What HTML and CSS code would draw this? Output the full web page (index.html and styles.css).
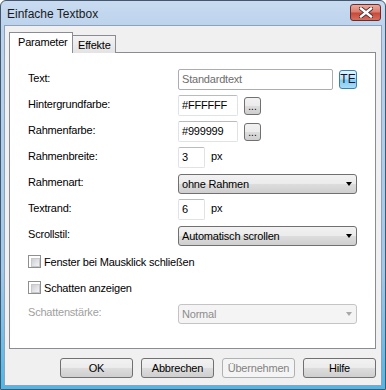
FILE: index.html
```html
<!DOCTYPE html>
<html lang="de">

<head>
    <meta charset="UTF-8" />
    <title>Einfache Textbox</title>
    <link rel="stylesheet" href="styles.css">
</head>

<body>
    <div class="window">
        <div class="titlebar">
            <span class="title">Einfache Textbox</span>
            <div class="close">
                <svg width="14" height="11" viewBox="0 0 14 11">
                    <path d="M2 1.5 L12 9.5 M12 1.5 L2 9.5" stroke="#4a2a2a" stroke-width="4.2" stroke-linecap="square" fill="none" />
                    <path d="M2 1.5 L12 9.5 M12 1.5 L2 9.5" stroke="#ffffff" stroke-width="2.4" stroke-linecap="square" fill="none" />
                </svg>
            </div>
        </div>

        <div class="client">
            <div class="tabs">
                <div class="tab active">Parameter</div>
                <div class="tab">Effekte</div>
            </div>

            <div class="panel">
                <div class="form">
                    <div class="label">Text:</div>
                    <div class="field">
                        <div class="input wide placeholder">Standardtext</div>
                        <div class="te">TE</div>
                    </div>

                    <div class="label">Hintergrundfarbe:</div>
                    <div class="field">
                        <div class="input color">#FFFFFF</div>
                        <div class="dots">...</div>
                    </div>

                    <div class="label">Rahmenfarbe:</div>
                    <div class="field">
                        <div class="input color">#999999</div>
                        <div class="dots">...</div>
                    </div>

                    <div class="label">Rahmenbreite:</div>
                    <div class="field">
                        <div class="input small">3</div>
                        <span class="unit">px</span>
                    </div>

                    <div class="label">Rahmenart:</div>
                    <div class="field">
                        <div class="select">ohne Rahmen<span class="arrow"></span></div>
                    </div>

                    <div class="label">Textrand:</div>
                    <div class="field">
                        <div class="input small">6</div>
                        <span class="unit">px</span>
                    </div>

                    <div class="label">Scrollstil:</div>
                    <div class="field">
                        <div class="select">Automatisch scrollen<span class="arrow"></span></div>
                    </div>

                    <div class="check"><span class="box"></span>Fenster bei Mausklick schließen</div>
                    <div class="check"><span class="box"></span>Schatten anzeigen</div>

                    <div class="label disabled">Schattenstärke:</div>
                    <div class="field">
                        <div class="select off">Normal<span class="arrow"></span></div>
                    </div>
                </div>
            </div>

            <div class="buttons">
                <div class="btn">OK</div>
                <div class="btn">Abbrechen</div>
                <div class="btn off">Übernehmen</div>
                <div class="btn">Hilfe</div>
            </div>
        </div>
    </div>
</body>

</html>
```

FILE: styles.css
```css
body {
    margin: 0;
    font-family: 'Liberation Sans', Arial, sans-serif;
    font-size: 11px;
    letter-spacing: -0.2px;
    color: #000;
    background: #fff;
}

.window {
    width: 386px;
    height: 390px;
    box-sizing: border-box;
    border: 1px solid #44576c;
    border-radius: 6px 6px 0 0;
    background: linear-gradient(180deg, #c8dbf0 0, #bcd3ed 26px, #9fc8ea 70%, #4cb8e8 100%);
    display: flex;
    flex-direction: column;
}

.titlebar {
    height: 24px;
    display: flex;
    justify-content: space-between;
    align-items: flex-start;
    padding: 0 4px 0 6px;
}

.title {
    font-size: 12px;
    letter-spacing: 0;
    line-height: 27px;
    color: #1a1a1a;
}

.close {
    margin-top: 3px;
    width: 29px;
    height: 15px;
    border: 1px solid #6b2c2c;
    border-radius: 3px;
    background: linear-gradient(180deg, #eaa99c 0, #d97f70 45%, #c8493a 55%, #d6705e 100%);
    display: flex;
    align-items: center;
    justify-content: center;
}

.client {
    flex: 1;
    margin: 0 3px 3px;
    border: 1px solid #8ea3bb;
    background: #f0f0f0;
    padding: 6px 5px 0 4px;
}

.tabs {
    display: flex;
    align-items: flex-end;
    height: 21px;
    margin-bottom: -1px;
}

.tab {
    height: 18px;
    box-sizing: border-box;
    border: 1px solid #898c95;
    border-bottom: none;
    background: linear-gradient(180deg, #f3f3f3, #e3e3e3);
    padding: 3px 4px 0 5px;
    margin-left: -1px;
}

.tab.active {
    position: relative;
    z-index: 1;
    height: 21px;
    width: 64px;
    background: #fff;
    margin-left: 0;
    padding: 3px 0 0 8px;
}

.panel {
    height: 297px;
    box-sizing: border-box;
    border: 1px solid #898c95;
    background: #fff;
    padding: 16px 0 0 18px;
}

.form {
    display: grid;
    grid-template-columns: 150px 179px;
    grid-auto-rows: 21px;
    row-gap: 5px;
    align-items: center;
}

.label {
    margin-top: -3px;
}

.label.disabled {
    color: #a0a0a0;
}

.field {
    display: flex;
    align-items: center;
    gap: 6px;
}

.input {
    height: 21px;
    box-sizing: border-box;
    border: 1px solid #dfe3e8;
    border-top-color: #b7bcc4;
    border-radius: 2px;
    padding: 3px 0 0 3px;
    background: #fff;
}

.input.wide {
    width: 155px;
    border-color: #abadb3;
}

.input.placeholder {
    color: #6d6d6d;
}

.input.color {
    width: 60px;
}

.input.small {
    width: 27px;
}

.unit {
    margin-top: -3px;
}

.te {
    width: 18px;
    height: 19px;
    box-sizing: border-box;
    border: 1px solid #3c7fb1;
    border-radius: 3px;
    background: linear-gradient(180deg, #e4f5fd 0, #b6e3f9 45%, #7fcdf3 55%, #a9dcf6 100%);
    text-align: center;
    line-height: 17px;
    font-size: 12px;
    letter-spacing: 0;
    color: #1c1030;
}

.dots {
    width: 17px;
    height: 18px;
    box-sizing: border-box;
    border: 1px solid #707070;
    border-radius: 3px;
    background: linear-gradient(180deg, #f2f2f2 0, #ebebeb 50%, #dddddd 50%, #cfcfcf 100%);
    text-align: center;
    line-height: 18px;
    font-size: 10px;
    letter-spacing: 0;
}

.select {
    width: 179px;
    height: 20px;
    box-sizing: border-box;
    border: 1px solid #707070;
    border-radius: 3px;
    background: linear-gradient(180deg, #f2f2f2 0, #ebebeb 50%, #dddddd 50%, #cfcfcf 100%);
    padding: 0 0 0 3px;
    display: flex;
    align-items: center;
    justify-content: space-between;
    line-height: 18px;
}

.select.off {
    border-color: #c4c4c4;
    background: #f4f4f4;
    color: #8d8d8d;
}

.arrow {
    width: 0;
    height: 0;
    margin-right: 4px;
    border-left: 3.5px solid transparent;
    border-right: 3.5px solid transparent;
    border-top: 4px solid #000;
}

.select.off .arrow {
    border-top-color: #a8a8a8;
}

.check {
    grid-column: 1 / 3;
    display: flex;
    align-items: center;
    gap: 3px;
}

.box {
    width: 13px;
    height: 13px;
    box-sizing: border-box;
    border: 1px solid #8e8f8f;
    background: #fff;
    padding: 2px;
    display: inline-block;
}

.box::after {
    content: "";
    display: block;
    width: 7px;
    height: 7px;
    border: 1px solid #c8c8c8;
    background: linear-gradient(135deg, #cbcfd5, #f4f4f4);
}

.buttons {
    display: flex;
    justify-content: flex-end;
    gap: 8px;
    margin-top: 9px;
}

.btn {
    width: 73px;
    height: 20px;
    box-sizing: border-box;
    border: 1px solid #707070;
    border-radius: 3px;
    background: linear-gradient(180deg, #f2f2f2 0, #ebebeb 50%, #dddddd 50%, #cfcfcf 100%);
    text-align: center;
    line-height: 18px;
}

.btn.off {
    border-color: #adb2b5;
    background: #f4f4f4;
    color: #838383;
}
```
